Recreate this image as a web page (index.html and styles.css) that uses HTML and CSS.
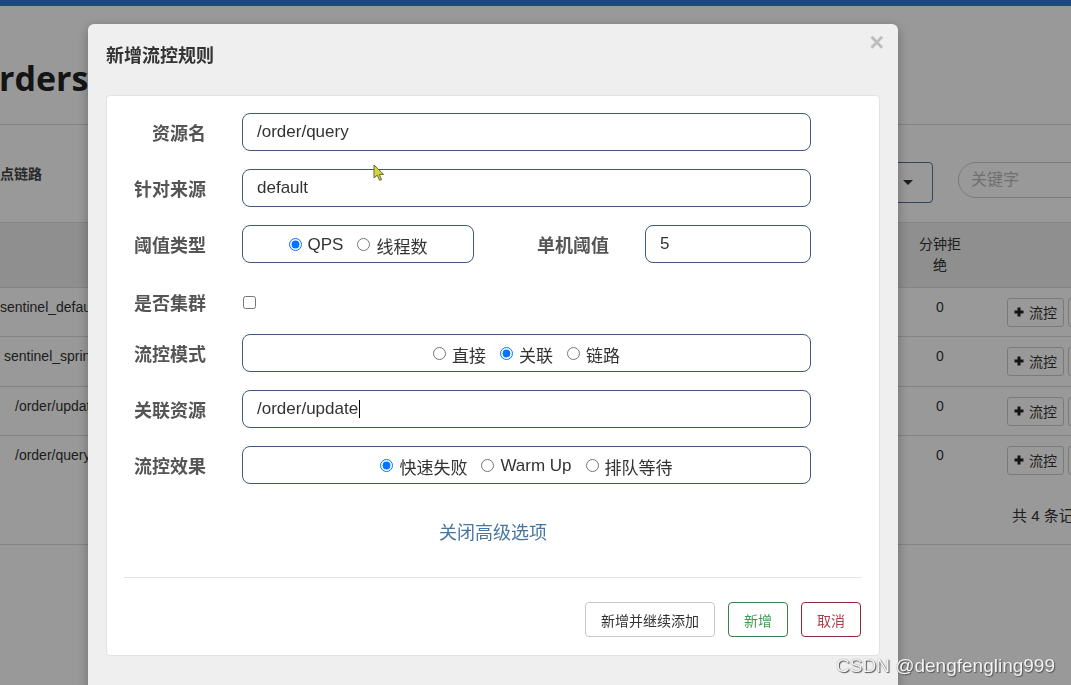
FILE: index.html
```html
<!DOCTYPE html>
<html lang="zh-CN">
<head>
<meta charset="utf-8">
<title>新增流控规则</title>
<link rel="stylesheet" href="styles.css">
</head>
<body>
<div class="page">
  <div class="navbar"></div>
  <div class="title-row"><h1 class="app-title">orders</h1></div>
  <div class="filter-row">
    <span class="crumb">簇点链路</span>
    <div class="tools">
      <div class="select"><span class="caret-down"></span></div>
      <div class="search">关键字</div>
    </div>
  </div>
  <table class="grid">
    <colgroup><col class="c-name"><col class="c-num"><col class="c-op"></colgroup>
    <thead>
      <tr><th></th><th>分钟拒绝</th><th></th></tr>
    </thead>
    <tbody>
      <tr class="r49"><td class="lvl0">sentinel_default_context</td><td class="num">0</td><td class="ops"><button class="op"><svg class="plus" viewBox="0 0 10 10"><path d="M5 0.5V9.5M0.5 5H9.5"/></svg>流控</button><button class="op"><svg class="plus" viewBox="0 0 10 10"><path d="M5 0.5V9.5M0.5 5H9.5"/></svg>降级</button></td></tr>
      <tr class="r50"><td class="lvl1">sentinel_spring_web_context</td><td class="num">0</td><td class="ops"><button class="op"><svg class="plus" viewBox="0 0 10 10"><path d="M5 0.5V9.5M0.5 5H9.5"/></svg>流控</button><button class="op"><svg class="plus" viewBox="0 0 10 10"><path d="M5 0.5V9.5M0.5 5H9.5"/></svg>降级</button></td></tr>
      <tr class="r49"><td class="lvl2">/order/update</td><td class="num">0</td><td class="ops"><button class="op"><svg class="plus" viewBox="0 0 10 10"><path d="M5 0.5V9.5M0.5 5H9.5"/></svg>流控</button><button class="op"><svg class="plus" viewBox="0 0 10 10"><path d="M5 0.5V9.5M0.5 5H9.5"/></svg>降级</button></td></tr>
      <tr class="r50"><td class="lvl2">/order/query</td><td class="num">0</td><td class="ops"><button class="op"><svg class="plus" viewBox="0 0 10 10"><path d="M5 0.5V9.5M0.5 5H9.5"/></svg>流控</button><button class="op"><svg class="plus" viewBox="0 0 10 10"><path d="M5 0.5V9.5M0.5 5H9.5"/></svg>降级</button></td></tr>
    </tbody>
    <tfoot>
      <tr><td></td><td></td><td class="pager">共 4 条记录</td></tr>
    </tfoot>
  </table>
</div>

<div class="backdrop"></div>

<div class="modal" role="dialog">
  <div class="modal-header">
    <h2 class="modal-title">新增流控规则</h2>
    <span class="close">×</span>
  </div>
  <div class="panel">
    <div class="form">
      <div class="row">
        <label class="lbl">资源名</label>
        <div class="field">/order/query</div>
      </div>
      <div class="row">
        <label class="lbl">针对来源</label>
        <div class="field">default</div>
      </div>
      <div class="row">
        <label class="lbl">阈值类型</label>
        <div class="split">
          <div class="field radios narrow">
            <label class="opt"><input type="radio" name="grade" checked>QPS</label>
            <label class="opt"><input type="radio" name="grade">线程数</label>
          </div>
          <label class="lbl lbl-inline">单机阈值</label>
          <div class="field small">5</div>
        </div>
      </div>
      <div class="row check">
        <label class="lbl">是否集群</label>
        <div class="ctrl"><input class="cb" type="checkbox"></div>
      </div>
      <div class="row">
        <label class="lbl">流控模式</label>
        <div class="field radios">
          <label class="opt"><input type="radio" name="mode">直接</label>
          <label class="opt"><input type="radio" name="mode" checked>关联</label>
          <label class="opt"><input type="radio" name="mode">链路</label>
        </div>
      </div>
      <div class="row">
        <label class="lbl">关联资源</label>
        <div class="field">/order/update<span class="text-caret"></span></div>
      </div>
      <div class="row last">
        <label class="lbl">流控效果</label>
        <div class="field radios">
          <label class="opt"><input type="radio" name="effect" checked>快速失败</label>
          <label class="opt"><input type="radio" name="effect">Warm Up</label>
          <label class="opt"><input type="radio" name="effect">排队等待</label>
        </div>
      </div>
    </div>
    <div class="advanced">关闭高级选项</div>
    <div class="panel-footer">
      <div class="actions">
        <button class="btn btn-default">新增并继续添加</button>
        <button class="btn btn-ok">新增</button>
        <button class="btn btn-cancel">取消</button>
      </div>
    </div>
  </div>
</div>

<svg class="pointer" viewBox="0 0 12 18" width="12" height="18"><path d="M1 1V14L4.2 11.2L6.6 16.4L8.6 15.5L6.3 10.4H10.6Z"/></svg>

<div class="watermark">CSDN @dengfengling999</div>
</body>
</html>
```

FILE: styles.css
```css
* { box-sizing: border-box; }
html, body { margin: 0; padding: 0; }
body {
  width: 1071px;
  height: 685px;
  overflow: hidden;
  position: relative;
  background: #fff;
  font-family: "Liberation Sans", "Noto Sans CJK SC", sans-serif;
  color: #333;
}

/* ---------- background page ---------- */
.page {
  margin-left: -30px;
  width: 1208px;
}
.navbar {
  height: 6px;
  background: #307bca;
}
.title-row {
  padding: 52px 0 26px 8px;
  border-bottom: 1px solid #ddd;
}
.app-title {
  margin: 0;
  font-family: "Open Sans", "Liberation Sans", sans-serif;
  font-size: 34px;
  line-height: 40px;
  font-weight: bold;
  color: #222;
}
.filter-row {
  display: flex;
  align-items: flex-start;
  padding: 37px 20px 19px 16px;
  border-bottom: 1px solid #ddd;
}
.crumb {
  flex: 1;
  font-size: 14px;
  line-height: 24px;
  font-weight: bold;
  color: #444;
}
.tools {
  display: flex;
  align-items: flex-start;
  gap: 25px;
}
.select {
  width: 53px;
  height: 41px;
  border: 1px solid #53759e;
  border-radius: 4px;
  display: flex;
  align-items: center;
  justify-content: flex-end;
  padding-right: 19px;
}
.caret-down {
  width: 0;
  height: 0;
  border-left: 5px solid transparent;
  border-right: 5px solid transparent;
  border-top: 5px solid #333;
}
.search {
  width: 200px;
  height: 36px;
  border: 1px solid #ccc;
  border-radius: 18px;
  padding-left: 12px;
  font-size: 16px;
  line-height: 34px;
  color: #bbb;
}
.grid {
  width: 1208px;
  table-layout: fixed;
  border-collapse: collapse;
  font-size: 14px;
}
.c-name { width: 937px; }
.c-num { width: 66px; }
.c-op { width: 205px; }
.grid th {
  height: 64px;
  background: #eee;
  font-weight: normal;
  line-height: 21px;
  padding: 0 8px;
  text-align: center;
}
.grid td {
  vertical-align: top;
  padding: 9px 8px 0;
  line-height: 20px;
  white-space: nowrap;
  overflow: hidden;
}
.grid tbody td { border-top: 1px solid #ddd; }
.r49 { height: 49px; }
.r50 { height: 50px; }
.grid td.lvl0 { padding-left: 30px; }
.grid td.lvl1 { padding-left: 34px; }
.grid td.lvl2 { padding-left: 45px; }
.grid td.num { text-align: center; }
.grid td.ops { padding-left: 34px; padding-top: 10px; }
.op {
  display: inline-flex;
  align-items: center;
  gap: 5px;
  height: 29px;
  padding: 0 6px;
  margin-right: 4px;
  border: 1px solid #ccc;
  border-radius: 3px;
  background: #fff;
  font-family: inherit;
  font-size: 14px;
  color: #333;
}
.plus {
  width: 10px;
  height: 10px;
  stroke: #222;
  stroke-width: 3;
  fill: none;
}
.grid tfoot tr { height: 59px; border-bottom: 1px solid #ddd; }
.grid td.pager {
  padding: 21px 0 0 39px;
  font-size: 15px;
}

/* ---------- modal ---------- */
.backdrop {
  position: fixed;
  inset: 0;
  background: rgba(0, 0, 0, 0.4);
}
.modal {
  position: fixed;
  left: 88px;
  top: 24px;
  width: 810px;
  padding: 20px 18px 60px;
  background: #efefef;
  border-radius: 6px;
  box-shadow: 0 3px 12px rgba(0, 0, 0, 0.3);
}
.modal-header {
  display: flex;
  justify-content: space-between;
  align-items: flex-start;
  height: 24px;
}
.modal-title {
  margin: 0;
  font-size: 18px;
  line-height: 24px;
  font-weight: bold;
  color: #333;
}
.close {
  font-size: 25px;
  line-height: 24px;
  font-weight: bold;
  color: #bdbdbd;
  margin-top: -14px;
  margin-right: -4px;
}
.panel {
  margin-top: 27px;
  background: #fff;
  border: 1px solid #e2e2e2;
  border-radius: 4px;
  padding: 17px 0 18px;
}
.form { padding-bottom: 1px; }
.row {
  display: flex;
  align-items: center;
  gap: 36px;
  height: 38px;
  margin-bottom: 18px;
}
.row.last { margin-bottom: 0; }
.row.check {
  box-sizing: content-box;
  height: 28px;
  padding-top: 7px;
}
.lbl {
  width: 99px;
  flex: none;
  text-align: right;
  font-size: 18px;
  font-weight: bold;
  color: #555;
}
.field {
  width: 569px;
  height: 38px;
  border: 1px solid #3d5a78;
  border-radius: 8px;
  padding: 0 14px;
  display: flex;
  align-items: center;
  font-size: 17px;
  color: #333;
}
.split {
  width: 569px;
  display: flex;
  align-items: center;
}
.field.narrow { width: 232px; flex: none; }
.lbl-inline { flex: 1; width: auto; margin-right: 36px; }
.field.small { width: 166px; flex: none; }
.radios {
  justify-content: center;
  gap: 14px;
}
.opt {
  display: inline-flex;
  align-items: center;
  gap: 6px;
  padding-top: 2px;
}
.opt input {
  margin: -2px 0 0;
  width: 13px;
  height: 13px;
}
.ctrl { display: flex; align-items: center; }
.cb { margin: 0 0 0 1px; width: 13px; height: 13px; }
.text-caret {
  display: inline-block;
  width: 1px;
  height: 18px;
  background: #000;
  margin-left: 1px;
}
.advanced {
  margin-top: 36px;
  text-align: center;
  font-size: 18px;
  line-height: 24px;
  color: #4775a3;
}
.panel-footer {
  margin: 32px 18px 0 17px;
  border-top: 1px solid #e3e3e3;
  padding-top: 24px;
}
.actions {
  display: flex;
  justify-content: flex-end;
  gap: 13px;
}
.btn {
  height: 35px;
  padding: 0 15px;
  border: 1px solid #c8c8c8;
  border-radius: 4px;
  background: #fff;
  font-family: inherit;
  font-size: 14px;
  color: #333;
}
.btn-default { min-width: 130px; }
.btn-ok { border-color: #3b7d4b; color: #3f9a52; }
.btn-cancel { border-color: #8c2a3a; color: #ad3f4d; }

/* ---------- overlays ---------- */
.pointer {
  position: fixed;
  left: 373px;
  top: 164px;
  fill: #d3d63c;
  stroke: #4a4a1a;
  stroke-width: 0.8;
}
.watermark {
  position: fixed;
  right: 16px;
  bottom: 8px;
  font-size: 19px;
  color: #f4f4f4;
  text-shadow: 1px 1px 1px #555, 0 0 1px #777;
}
```
